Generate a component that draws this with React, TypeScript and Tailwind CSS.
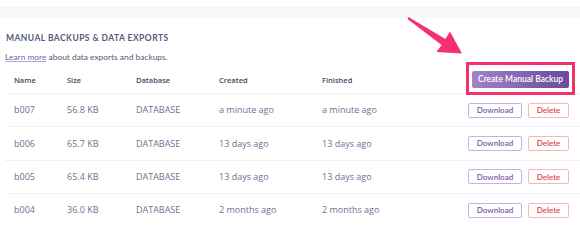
const backups = [
  { name: "b007", size: "56.8 KB", db: "DATABASE", created: "a minute ago", finished: "a minute ago" },
  { name: "b006", size: "65.7 KB", db: "DATABASE", created: "13 days ago", finished: "13 days ago" },
  { name: "b005", size: "65.4 KB", db: "DATABASE", created: "13 days ago", finished: "13 days ago" },
  { name: "b004", size: "36.0 KB", db: "DATABASE", created: "2 months ago", finished: "2 months ago" },
];

const openSans = { fontFamily: "'Open Sans', 'Noto Sans', sans-serif" };
const lato = { fontFamily: "Lato, 'Open Sans', sans-serif" };

const App = () => (
  <div className="relative w-[580px] h-[226px] overflow-hidden bg-white" style={openSans}>
    <div className="h-[7px]" />
    <div className="h-[11px] bg-[#f6f7fb]" />

    <div className="mt-[14px] pl-[6px] text-[8.5px] leading-[12px] font-bold tracking-[0.45px] text-[#545c7c]" style={lato}>
      MANUAL BACKUPS &amp; DATA EXPORTS
    </div>
    <p className="mt-[7px] pl-[5px] text-[8.4px] leading-[12px] text-[#525a78]" style={lato}>
      <a className="text-[#7d5fb0] underline decoration-[#b8a6d8]">Learn more</a> about data exports and backups.
    </p>

    <div className="ml-[5px]">
      <div className="flex h-[30px] items-center pl-[9px] text-[7.5px] font-semibold text-[#3f4968]">
        <div className="w-[53px] pt-[6px]">Name</div>
        <div className="w-[69px] pt-[6px]">Size</div>
        <div className="w-[83px] pt-[6px]">Database</div>
        <div className="w-[103px] pt-[6px]">Created</div>
        <div className="flex-1 pt-[6px]">Finished</div>
        <button
          className="mr-[11px] mt-[2px] h-[17px] w-[97px] rounded-[2px] bg-gradient-to-r from-[#a283c9] to-[#6a4a9a] text-[8.5px] font-semibold text-white"
          style={lato}
        >
          Create Manual Backup
        </button>
      </div>

      {backups.map((b) => (
        <div key={b.name} className="flex h-[33.3px] items-center border-t border-[#eef0f5] pl-[9px] text-[9px] text-[#6a7291]">
          <div className="w-[53px]">{b.name}</div>
          <div className="w-[69px]">{b.size}</div>
          <div className="w-[83px]">{b.db}</div>
          <div className="w-[103px]">{b.created}</div>
          <div className="flex-1">{b.finished}</div>
          <div className="mr-[11px] flex gap-[6px] text-[8px] font-semibold" style={lato}>
            <button className="h-[15px] w-[54px] rounded-[2px] border border-[#c4b3de] text-[#7a5aa8]">Download</button>
            <button className="h-[15px] w-[41px] rounded-[2px] border border-[#f4b8ba] text-[#dc4450]">Delete</button>
          </div>
        </div>
      ))}
    </div>

    {/* annotation overlay */}
    <div className="absolute left-[466px] top-[62px] h-[33px] w-[109px] border-[3px] border-[#f52e6c]" />
    <svg className="absolute left-0 top-0" width="580" height="226">
      <polygon
        points="408.5,17 445.4,39.1 450,31.5 462,53.5 436.5,52 441.6,44.9 407.5,19"
        fill="#f6306f"
      />
    </svg>
  </div>
);

export default App;
